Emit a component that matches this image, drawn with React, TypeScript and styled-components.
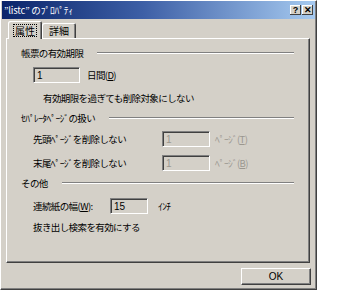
import React from 'react';
import styled, { createGlobalStyle } from 'styled-components';

const GlobalStyle = createGlobalStyle`
  html, body {
    margin: 0;
    padding: 0;
    background: #ffffff;
  }
  body {
    font-family: "Noto Sans CJK JP", "DejaVu Sans", sans-serif;
    font-size: 9.5px;
    letter-spacing: -0.6px;
    color: #000;
  }
`;

const Dialog = styled.div`
  width: 317px;
  height: 290px;
  box-sizing: border-box;
  background: #d4d0c8;
  border: 1px solid;
  border-color: #ffffff #404040 #404040 #ffffff;
  box-shadow: inset -1px -1px 0 #808080;
  display: flex;
  flex-direction: column;
`;

const TitleBar = styled.div`
  height: 18px;
  margin: 0 1px;
  padding: 0 2px 0 2px;
  background: linear-gradient(to right, #0a246a, #3d5fa6 45%, #a6caf0);
  display: flex;
  align-items: center;
  color: #ffffff;
  font-size: 9.5px;
  letter-spacing: -0.2px;
`;

const TitleText = styled.div`
  flex: 1;
  white-space: nowrap;
`;

const CaptionButton = styled.div`
  width: 11px;
  height: 10px;
  margin-left: 1px;
  background: #d4d0c8;
  box-shadow: inset -1px -1px 0 #404040, inset 1px 1px 0 #ffffff;
  color: #000;
  font: bold 9px "Liberation Sans", sans-serif;
  letter-spacing: 0;
  display: flex;
  align-items: center;
  justify-content: center;
  line-height: 1;
`;

const TabRow = styled.div`
  display: flex;
  align-items: flex-end;
  height: 18px;
  padding-left: 7px;
  margin-top: 1px;
  position: relative;
  z-index: 1;
`;

const Tab = styled.div<{ $active?: boolean }>`
  height: ${(p) => (p.$active ? 18 : 15)}px;
  margin-bottom: ${(p) => (p.$active ? -1 : 0)}px;
  padding: 0 ${(p) => (p.$active ? 6 : 7)}px;
  background: #d4d0c8;
  border-radius: 2px 2px 0 0;
  box-shadow: inset 1px 1px 0 #ffffff, inset -1px 0 0 #404040,
    inset -2px 0 0 #808080;
  display: flex;
  align-items: center;
  font-size: 10px;
  letter-spacing: 0;
`;

const Focus = styled.span`
  outline: 1px dotted #000;
  padding: 0 1px;
  line-height: 11px;
`;

const Panel = styled.div`
  height: 225px;
  margin: 0 6px 0 5px;
  padding: 7px 15px 0 14px;
  box-sizing: border-box;
  background: #d4d0c8;
  border: 1px solid;
  border-color: #ffffff #404040 #404040 #ffffff;
  box-shadow: inset -1px -1px 0 #808080;
  display: flex;
  flex-direction: column;
`;

const GroupHeader = styled.div<{ $mt?: number }>`
  display: flex;
  align-items: center;
  height: 14px;
  margin-top: ${(p) => p.$mt ?? 0}px;
`;

const GroupLine = styled.div`
  flex: 1;
  height: 0;
  margin-left: 14px;
  border-top: 1px solid #808080;
  border-bottom: 1px solid #ffffff;
`;

const Row = styled.div<{ $mt: number; $indent?: number }>`
  display: flex;
  align-items: center;
  height: 16px;
  margin-top: ${(p) => p.$mt}px;
  padding-left: ${(p) => p.$indent ?? 12}px;
  white-space: nowrap;
`;

const Label = styled.div<{ $w: number }>`
  width: ${(p) => p.$w}px;
`;

const Field = styled.div<{ $w: number; $disabled?: boolean }>`
  width: ${(p) => p.$w}px;
  height: 16px;
  box-sizing: border-box;
  padding: 1px 0 0 3px;
  background: #d4d0c8;
  border: 1px solid;
  border-color: #808080 #ffffff #ffffff #808080;
  box-shadow: inset 1px 1px 0 #404040;
  color: ${(p) => (p.$disabled ? '#9a9790' : '#000')};
  font-family: "Liberation Sans", sans-serif;
  font-size: 10px;
  line-height: 13px;
  letter-spacing: 0;
`;

const Unit = styled.div<{ $ml: number; $disabled?: boolean }>`
  margin-left: ${(p) => p.$ml}px;
  color: ${(p) => (p.$disabled ? '#9a9790' : '#000')};
`;

const Footer = styled.div`
  display: flex;
  justify-content: flex-end;
  padding: 5px 5px 0 0;
`;

const Button = styled.div`
  width: 70px;
  height: 17px;
  box-sizing: border-box;
  border: 1px solid;
  border-color: #ffffff #404040 #404040 #ffffff;
  box-shadow: inset -1px -1px 0 #808080;
  display: flex;
  align-items: center;
  justify-content: center;
  font-family: "Liberation Sans", sans-serif;
  font-size: 10px;
  letter-spacing: 0;
`;

const App: React.FC = () => {
  return (
    <>
      <GlobalStyle />
      <Dialog>
        <TitleBar>
          <TitleText>”listc” のﾌﾟﾛﾊﾟﾃｨ</TitleText>
          <CaptionButton>?</CaptionButton>
          <CaptionButton>✕</CaptionButton>
        </TitleBar>
        <TabRow>
          <Tab $active>
            <Focus>属性</Focus>
          </Tab>
          <Tab>詳細</Tab>
        </TabRow>
        <Panel>
          <GroupHeader>
            帳票の有効期限
            <GroupLine />
          </GroupHeader>
          <Row $mt={7} $indent={12}>
            <Field $w={47}>1</Field>
            <Unit $ml={7}>
              日間(<u>D</u>)
            </Unit>
          </Row>
          <Row $mt={7} $indent={22}>
            有効期限を過ぎても削除対象にしない
          </Row>
          <GroupHeader $mt={5}>
            ｾﾊﾟﾚｰﾀﾍﾟｰｼﾞの扱い
            <GroupLine />
          </GroupHeader>
          <Row $mt={6}>
            <Label $w={129}>先頭ﾍﾟｰｼﾞを削除しない</Label>
            <Field $w={48} $disabled>
              1
            </Field>
            <Unit $ml={5} $disabled>
              ﾍﾟｰｼﾞ(<u>T</u>)
            </Unit>
          </Row>
          <Row $mt={8}>
            <Label $w={129}>末尾ﾍﾟｰｼﾞを削除しない</Label>
            <Field $w={48} $disabled>
              1
            </Field>
            <Unit $ml={5} $disabled>
              ﾍﾟｰｼﾞ(<u>B</u>)
            </Unit>
          </Row>
          <GroupHeader $mt={5}>
            その他
            <GroupLine />
          </GroupHeader>
          <Row $mt={8}>
            <Label $w={77}>
              連続紙の幅(<u>W</u>):
            </Label>
            <Field $w={38}>15</Field>
            <Unit $ml={10}>ｲﾝﾁ</Unit>
          </Row>
          <Row $mt={5}>抜き出し検索を有効にする</Row>
        </Panel>
        <Footer>
          <Button>OK</Button>
        </Footer>
      </Dialog>
    </>
  );
};

export default App;
